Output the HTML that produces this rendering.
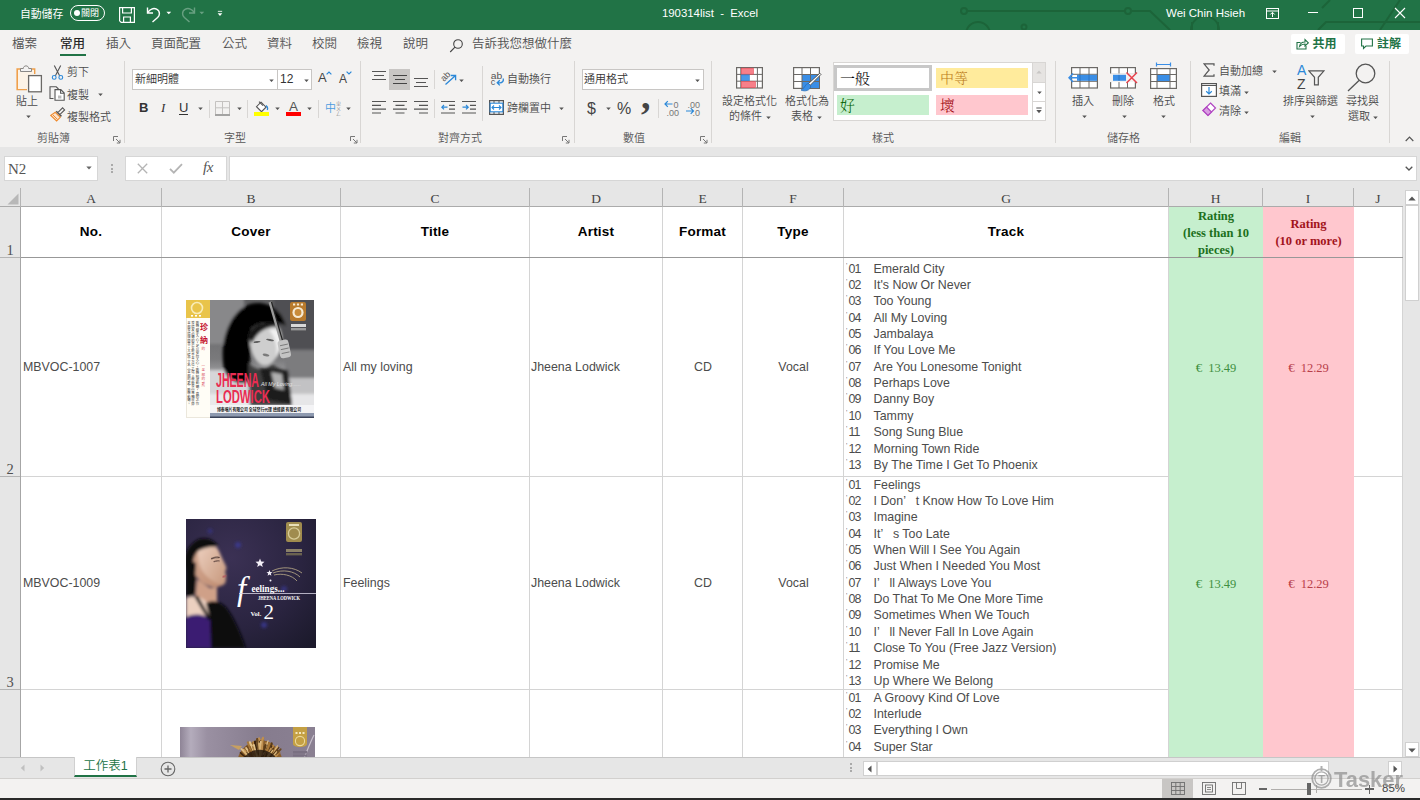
<!DOCTYPE html>
<html lang="zh-Hant">
<head>
<meta charset="utf-8">
<title>190314list - Excel</title>
<style>
*{box-sizing:border-box;margin:0;padding:0}
html,body{width:1420px;height:800px;overflow:hidden;background:#f3f2f1}
body{font-family:"Liberation Sans","Noto Sans CJK TC",sans-serif;font-size:12px;color:#444;position:relative}
.abs{position:absolute}
#app{position:absolute;left:0;top:0;width:1420px;height:800px;overflow:hidden}
/* title bar */
#title{position:absolute;left:0;top:0;width:1420px;height:30px;background:#217346;color:#fff}
#title .t{position:absolute;white-space:nowrap;line-height:14px}
/* tabs */
#tabs{position:absolute;left:0;top:30px;width:1420px;height:27px;background:#f3f2f1}
#tabs .tab{position:absolute;font-weight:350;top:7px;font-size:12.5px;line-height:14px;color:#505050;white-space:nowrap;letter-spacing:0}
/* ribbon */
#ribbon{position:absolute;left:0;top:57px;width:1420px;height:90px;background:#f3f2f1}
#ribbon .lbl{position:absolute;font-weight:350;font-size:11px;line-height:13px;color:#4a4a4a;white-space:nowrap}
#ribbon .sep{position:absolute;top:4px;width:1px;height:82px;background:#d8d6d4}
#ribbon .grp{position:absolute;font-weight:350;top:75px;font-size:11px;line-height:13px;color:#555;white-space:nowrap}
/* formula zone */
#fzone{position:absolute;left:0;top:147px;width:1420px;height:60px;background:#e6e6e6}
/* grid */
#grid{position:absolute;left:0;top:207px;width:1403px;height:550px;background:#fff;overflow:hidden}
.vl{position:absolute;top:0;width:1px;height:550px;background:#d4d4d4}
.hl{position:absolute;left:21px;height:1px;width:1382px;background:#d4d4d4}
.cell{position:absolute;white-space:nowrap;color:#4c4c4c;font-size:12.4px;line-height:17px}
.hd{position:absolute;top:16px;letter-spacing:0.2px;font-weight:bold;color:#000;font-size:13.5px;line-height:17px;text-align:center}
.trk{position:absolute;left:846px;font-size:12.4px;line-height:16.37px;color:#4c4c4c;white-space:pre}
.trk div{height:16.37px}
.trk i{font-style:normal;display:inline-block;width:2.5px;font-size:7px;color:#777;vertical-align:top;line-height:10px;overflow:hidden}
.trk q{quotes:none;display:inline-block;width:12.5px}
.trk b{font-weight:normal;display:inline-block;width:25px;letter-spacing:-0.9px}
.rt{position:absolute;font-family:"Liberation Serif",serif;font-weight:bold;font-size:12.5px;line-height:17px;text-align:center}
.eu{text-align:center;font-family:"Liberation Serif",serif;font-size:12.5px}
.eu u{text-decoration:none;display:inline-block;width:12.5px;text-align:left;font-size:13px;line-height:10px}
.colh{position:absolute;top:44px;font-family:"Liberation Serif",serif;font-size:13.5px;line-height:15px;color:#444;text-align:center}
.rowh{position:absolute;left:0;width:20px;text-align:center;font-family:"Liberation Serif",serif;font-size:14.5px;line-height:15px;color:#505050;margin-top:0.5px}
#ribbon .sty{font-family:"Liberation Serif","Noto Serif CJK SC","Noto Serif CJK TC",serif;font-size:15px;line-height:18px}
svg.arr{width:5px;height:3.4px;margin:0.8px 0 0 0.5px}
</style>
</head>
<body>
<div id="app">

<!-- TITLE BAR -->
<div id="title">
<svg class="abs" style="left:940px;top:0" width="480" height="30" viewBox="940 0 480 30" fill="none" stroke="#1c6439" stroke-width="2">
<circle cx="964" cy="11" r="3"/><path d="M967 11H1125"/><circle cx="1128" cy="11" r="3"/><path d="M1131 11H1150L1170 30"/>
<circle cx="978" cy="34" r="12"/><circle cx="1024" cy="27" r="2.5"/>
<circle cx="1205" cy="30" r="14"/><path d="M1192 22V30M1218 22V30"/>
<path d="M1318 30L1326 22H1420M1380 30L1400 0M1330 0L1322 8"/>
</svg>
<div class="t" style="left:20px;top:7px;font-size:10.8px">自動儲存</div>
<div class="abs" style="left:70px;top:5px;width:35px;height:16px;border:1px solid #fff;border-radius:8px"></div>
<div class="abs" style="left:74px;top:10px;width:6px;height:6px;border-radius:3px;background:#fff"></div>
<div class="t" style="left:81px;top:7px;font-size:9px;line-height:12px;letter-spacing:0">關閉</div>
<svg class="abs" style="left:118px;top:6px" width="18" height="18" viewBox="0 0 18 18" fill="none" stroke="#fff" stroke-width="1.2"><path d="M1.6 1.6H16.4V16.4H3.2L1.6 14.8Z"/><path d="M4.6 1.6V7H13.4V1.6M5.6 16.4V11H12.4V16.4"/></svg>
<svg class="abs" style="left:145px;top:5px" width="18" height="18" viewBox="0 0 18 18" fill="none" stroke="#fff" stroke-width="1.4"><path d="M2.5 2.5V8H8"/><path d="M2.8 7.8C4.5 4.2 8.5 2.6 11.6 4.2C15.6 6.4 14.8 10.6 12.6 12.6L7.5 17"/></svg>
<svg class="abs" style="left:165.500px;top:11px" width="5.500" height="4" viewBox="0 0 7 5"><path d="M0.5 1H6.5L3.5 4.2Z" fill="#fff"/></svg>
<svg class="abs" style="left:179px;top:5px;opacity:.32" width="18" height="18" viewBox="0 0 18 18" fill="none" stroke="#fff" stroke-width="1.4"><path d="M15.5 2.5V8H10"/><path d="M15.2 7.8C13.5 4.2 9.5 2.6 6.4 4.2C2.4 6.4 3.2 10.6 5.4 12.6L10.5 17"/></svg>
<svg class="abs" style="left:198.500px;top:11px;opacity:.32" width="5.500" height="4" viewBox="0 0 7 5"><path d="M0.5 1H6.5L3.5 4.2Z" fill="#fff"/></svg>
<svg class="abs" style="left:216.500px;top:9.500px" width="6" height="7" viewBox="0 0 7 8"><path d="M1 1.5H6" stroke="#fff" stroke-width="1"/><path d="M0.8 3.6H6.2L3.5 6.8Z" fill="#fff"/></svg>
<div class="t" style="left:610px;top:6px;width:200px;text-align:center;font-size:11.4px">190314list&nbsp; -&nbsp; Excel</div>
<div class="t" style="left:1166px;top:6px;font-size:11.5px">Wei Chin Hsieh</div>
<svg class="abs" style="left:1266px;top:8px" width="13" height="11" viewBox="0 0 13 11" fill="none" stroke="#fff" stroke-width="1"><rect x="0.5" y="0.5" width="12" height="10"/><path d="M0.5 3H12.5"/><path d="M6.5 9V4.5M4.3 6.5L6.5 4.3L8.7 6.5"/></svg>
<div class="abs" style="left:1308px;top:12px;width:10px;height:1px;background:#fff"></div>
<div class="abs" style="left:1353px;top:8px;width:10px;height:10px;border:1px solid #fff"></div>
<svg class="abs" style="left:1394px;top:7px" width="12" height="12" viewBox="0 0 12 12" stroke="#fff" stroke-width="1.1"><path d="M1 1L11 11M11 1L1 11"/></svg>
</div>

<!-- TABS -->
<div id="tabs">
<div class="tab" style="left:12px">檔案</div>
<div class="tab" style="left:60px;color:#222;-webkit-text-stroke:0.2px #222;font-weight:400">常用</div>
<div class="abs" style="left:60px;top:24px;width:26px;height:2px;background:#217346"></div>
<div class="tab" style="left:106px">插入</div>
<div class="tab" style="left:151px">頁面配置</div>
<div class="tab" style="left:222px">公式</div>
<div class="tab" style="left:267px">資料</div>
<div class="tab" style="left:312px">校閱</div>
<div class="tab" style="left:357px">檢視</div>
<div class="tab" style="left:403px">說明</div>
<svg class="abs" style="left:449px;top:7.500px" width="15" height="15" viewBox="0 0 15 15" fill="none" stroke="#444" stroke-width="1.1"><circle cx="9" cy="6" r="4.3"/><path d="M6 9.2L1.2 14"/></svg>
<div class="tab" style="left:472px">告訴我您想做什麼</div>
<div class="abs" style="left:1291px;top:4px;width:54px;height:20px;background:#fff;border-radius:2px"></div>
<svg class="abs" style="left:1296px;top:8px" width="13" height="12" viewBox="0 0 13 12" fill="none" stroke="#217346" stroke-width="1.1"><path d="M4.5 4.5H1V11H10V8"/><path d="M3.5 8.5C4 5.5 6 4 9 4V1.5L12.3 4.8L9 8V6C6.5 6 5 6.8 3.5 8.5Z"/></svg>
<div class="tab" style="left:1312.500px;color:#217346;font-weight:bold;top:7px;font-size:12px">共用</div>
<div class="abs" style="left:1355px;top:4px;width:54px;height:20px;background:#fff;border-radius:2px"></div>
<svg class="abs" style="left:1361px;top:8px" width="12" height="12" viewBox="0 0 12 12" fill="none" stroke="#217346" stroke-width="1.1"><path d="M0.6 1H11.4V8H5L2.5 10.5V8H0.6Z"/></svg>
<div class="tab" style="left:1377px;color:#217346;font-weight:bold;top:7px;font-size:12px">註解</div>
</div>

<!-- RIBBON -->
<div id="ribbon">
<!-- clipboard group (ribbon top = 57) -->
<svg class="abs" style="left:15px;top:6px" width="28" height="30" viewBox="0 0 28 30" fill="none">
<path d="M6.5 6H2.2V26.5H12" stroke="#f0a04b" stroke-width="1.6"/><path d="M15.5 6H19.6V11" stroke="#f0a04b" stroke-width="1.6"/>
<path d="M3 7H19V26H3Z" fill="#fdf3e6" stroke="none"/>
<path d="M5.5 8.5V5.5H8.3C8.3 2 13.7 2 13.7 5.5H16.5V8.5Z" fill="#f3f2f1" stroke="#8a8886" stroke-width="1"/>
<rect x="13.6" y="12.6" width="12.8" height="16.2" fill="#fff" stroke="#6b6966" stroke-width="1.3"/>
</svg>
<div class="lbl" style="left:16px;top:38px">貼上</div>
<svg class="abs arr" preserveAspectRatio="none" style="left:25px;top:57px" width="6" height="4" viewBox="0 0 6 4"><path d="M0.3 0.5H5.7L3 3.6Z" fill="#555"/></svg>
<svg class="abs" style="left:51px;top:8px" width="13" height="15" viewBox="0 0 13 15" fill="none"><path d="M3.3 0.5L8.6 10.8M9.7 0.5L4.4 10.8" stroke="#555" stroke-width="1.1"/><circle cx="3.2" cy="12.4" r="1.9" stroke="#2b88d8" stroke-width="1.1"/><circle cx="9.8" cy="12.4" r="1.9" stroke="#2b88d8" stroke-width="1.1"/></svg>
<div class="lbl" style="left:67px;top:9px">剪下</div>
<svg class="abs" style="left:49px;top:29px" width="17" height="15" viewBox="0 0 17 15" fill="none" stroke="#555" stroke-width="1.1"><path d="M4.5 12.5H1V0.8H7.2L9.5 3"/><path d="M6 3.6H11.8L15.2 7V14.3H6Z" fill="#fff"/><path d="M11.6 3.8V7.2H15" /><rect x="9" y="9.5" width="3.4" height="3" fill="#bbb" stroke="none"/></svg>
<div class="lbl" style="left:67px;top:32px">複製</div>
<svg class="abs arr" preserveAspectRatio="none" style="left:97px;top:35px" width="6" height="4" viewBox="0 0 6 4"><path d="M0.3 0.5H5.7L3 3.6Z" fill="#555"/></svg>
<svg class="abs" style="left:50px;top:50px" width="16" height="15" viewBox="0 0 16 15" fill="none"><path d="M8.3 5.2L12.6 0.9L14.6 2.9L10.3 7.2" stroke="#555" stroke-width="1.1"/><path d="M6.2 4.2L11.4 9.4" stroke="#555" stroke-width="1.6"/><path d="M5.3 5.3L10.3 10.3L6.6 14L0.8 8.4Z" fill="#fbe3cd" stroke="#f08a2c" stroke-width="1.1"/><path d="M3 8L7.5 12.4" stroke="#f08a2c" stroke-width="1"/></svg>
<div class="lbl" style="left:67px;top:54px">複製格式</div>
<div class="grp" style="left:37px">剪貼簿</div>
<svg class="abs" style="left:113px;top:79px" width="8" height="8" viewBox="0 0 8 8" fill="none" stroke="#777" stroke-width="1"><path d="M0.5 5V0.5H5"/><path d="M3 3L7 7M7 3.8V7H3.8"/></svg>
<div class="sep" style="left:124px"></div>

<!-- font group -->
<div class="abs" style="left:132px;top:12px;width:146px;height:21px;background:#fff;border:1px solid #c8c6c4"></div>
<div class="lbl" style="left:135px;top:16px;color:#333">新細明體</div>
<svg class="abs arr" preserveAspectRatio="none" style="left:268px;top:21px" width="6" height="4" viewBox="0 0 6 4"><path d="M0.3 0.5H5.7L3 3.6Z" fill="#555"/></svg>
<div class="abs" style="left:277px;top:12px;width:35px;height:21px;background:#fff;border:1px solid #c8c6c4"></div>
<div class="lbl" style="left:280px;top:16px;font-size:12px;color:#333">12</div>
<svg class="abs arr" preserveAspectRatio="none" style="left:303px;top:21px" width="6" height="4" viewBox="0 0 6 4"><path d="M0.3 0.5H5.7L3 3.6Z" fill="#555"/></svg>
<div class="lbl" style="left:318px;top:14px;font-size:13px;line-height:14px;color:#444">A</div>
<svg class="abs" style="left:326px;top:14px" width="6" height="4" viewBox="0 0 6 4" fill="none" stroke="#2b88d8" stroke-width="1.2"><path d="M0.6 3.4L3 1L5.4 3.4"/></svg>
<div class="lbl" style="left:339px;top:15px;font-size:12px;line-height:14px;color:#444">A</div>
<svg class="abs" style="left:346px;top:14px" width="6" height="4" viewBox="0 0 6 4" fill="none" stroke="#2b88d8" stroke-width="1.2"><path d="M0.6 0.6L3 3L5.4 0.6"/></svg>
<div class="lbl" style="left:139px;top:44px;font-size:13px;line-height:14px;font-weight:bold;color:#333">B</div>
<div class="lbl" style="left:161px;top:44px;font-size:13px;line-height:14px;font-style:italic;font-family:'Liberation Serif',serif;color:#333">I</div>
<div class="lbl" style="left:179px;top:44px;font-size:13px;line-height:14px;color:#333;border-bottom:1px solid #333;height:14px">U</div>
<svg class="abs arr" preserveAspectRatio="none" style="left:197px;top:49px" width="6" height="4" viewBox="0 0 6 4"><path d="M0.3 0.5H5.7L3 3.6Z" fill="#555"/></svg>
<div class="abs" style="left:209px;top:43px;width:1px;height:18px;background:#d8d6d4"></div>
<svg class="abs" style="left:215px;top:44px" width="15" height="15" viewBox="0 0 15 15" fill="none"><path d="M0.5 0.5H14.5V13M0.5 0.5V13M7.5 0.5V13M0.5 6.8H14.5" stroke="#c4c2c0" stroke-width="1"/><path d="M0 14H15" stroke="#777" stroke-width="1.3"/></svg>
<svg class="abs arr" preserveAspectRatio="none" style="left:236px;top:49px" width="6" height="4" viewBox="0 0 6 4"><path d="M0.3 0.5H5.7L3 3.6Z" fill="#555"/></svg>
<div class="abs" style="left:247px;top:43px;width:1px;height:18px;background:#d8d6d4"></div>
<svg class="abs" style="left:255px;top:44px" width="14" height="12" viewBox="0 0 14 12" fill="none"><path d="M6 1.2L11 6.2L6.5 10.7L1.5 5.7Z" fill="#fff" stroke="#555" stroke-width="1.1"/><path d="M4 0.6L8 4.6" stroke="#555" stroke-width="1.1"/><path d="M11 4.5C12.8 6 12.8 7.8 12.2 9" stroke="#2b88d8" stroke-width="1.3"/></svg>
<div class="abs" style="left:254px;top:55px;width:15px;height:4px;background:#ffff00"></div>
<svg class="abs arr" preserveAspectRatio="none" style="left:274px;top:49px" width="6" height="4" viewBox="0 0 6 4"><path d="M0.3 0.5H5.7L3 3.6Z" fill="#555"/></svg>
<div class="lbl" style="left:289px;top:42.500px;font-size:13.500px;line-height:14px;color:#555">A</div>
<div class="abs" style="left:286px;top:55px;width:15px;height:4px;background:#ff0000"></div>
<svg class="abs arr" preserveAspectRatio="none" style="left:306px;top:49px" width="6" height="4" viewBox="0 0 6 4"><path d="M0.3 0.5H5.7L3 3.6Z" fill="#555"/></svg>
<div class="abs" style="left:318px;top:43px;width:1px;height:18px;background:#d8d6d4"></div>
<div class="lbl" style="left:325px;top:44px;font-size:11px;line-height:14px;color:#4a9be0">中</div>
<div class="lbl" style="left:336px;top:44px;font-size:5px;line-height:5px;color:#777;width:5px;white-space:normal;word-break:break-all">ㄓㄨㄥ</div>
<svg class="abs arr" preserveAspectRatio="none" style="left:345px;top:49px" width="6" height="4" viewBox="0 0 6 4"><path d="M0.3 0.5H5.7L3 3.6Z" fill="#555"/></svg>
<div class="grp" style="left:224px">字型</div>
<svg class="abs" style="left:350px;top:79px" width="8" height="8" viewBox="0 0 8 8" fill="none" stroke="#777" stroke-width="1"><path d="M0.5 5V0.5H5"/><path d="M3 3L7 7M7 3.8V7H3.8"/></svg>
<div class="sep" style="left:360px"></div>
<!-- alignment group -->
<svg class="abs" style="left:372px;top:13px" width="15" height="12" viewBox="0 0 15 12" stroke="#555" stroke-width="1.2"><path d="M0 1.5H14M2 5.5H12M0 9.5H14"/></svg>
<div class="abs" style="left:389px;top:12px;width:21px;height:21px;background:#c8c6c4"></div>
<svg class="abs" style="left:393px;top:17px" width="15" height="12" viewBox="0 0 15 12" stroke="#444" stroke-width="1.2"><path d="M0 1.5H14M2 5.5H12M0 9.5H14"/></svg>
<svg class="abs" style="left:414px;top:20px" width="15" height="12" viewBox="0 0 15 12" stroke="#555" stroke-width="1.2"><path d="M0 1.5H14M2 5.5H12M0 9.5H14"/></svg>
<div class="abs" style="left:434px;top:13px;width:1px;height:19px;background:#d8d6d4"></div>
<svg class="abs" style="left:440px;top:13px" width="17" height="16" viewBox="0 0 17 16" fill="none"><path d="M5.500 14.500L15.300 5.800M10.800 5.500H15.600V10.200" stroke="#2b88d8" stroke-width="1.300"/><text transform="translate(4,12) rotate(-45)" font-family="Liberation Sans, sans-serif" font-size="9" fill="#555">ab</text></svg>
<svg class="abs arr" preserveAspectRatio="none" style="left:458px;top:21px" width="6" height="4" viewBox="0 0 6 4"><path d="M0.3 0.5H5.7L3 3.6Z" fill="#555"/></svg>
<div class="abs" style="left:482px;top:9px;width:1px;height:55px;background:#d8d6d4"></div>
<svg class="abs" style="left:490px;top:13px" width="15" height="17" viewBox="0 0 15 17" fill="none"><text x="0.800" y="8.500" font-family="Liberation Sans, sans-serif" font-size="9.500" fill="#555" textLength="11.500" lengthAdjust="spacingAndGlyphs">ab</text><text x="0.800" y="14.800" font-family="Liberation Sans, sans-serif" font-size="9" fill="#555">c</text><path d="M13.300 8.500C13.800 11.500 12 12.800 10 12.800H7.500M9.800 10.200L7.200 12.800L9.800 15.400" stroke="#2b88d8" stroke-width="1.300"/></svg>
<div class="lbl" style="left:507px;top:16px">自動換行</div>
<svg class="abs" style="left:372px;top:43px" width="15" height="15" viewBox="0 0 15 15" stroke="#555" stroke-width="1.2"><path d="M0 1.5H14M0 5.3H9M0 9.2H14M0 13H9"/></svg>
<svg class="abs" style="left:393px;top:43px" width="15" height="15" viewBox="0 0 15 15" stroke="#555" stroke-width="1.2"><path d="M0 1.5H14M2.5 5.3H11.5M0 9.2H14M2.5 13H11.5"/></svg>
<svg class="abs" style="left:414px;top:43px" width="15" height="15" viewBox="0 0 15 15" stroke="#555" stroke-width="1.2"><path d="M0 1.5H14M5 5.3H14M0 9.2H14M5 13H14"/></svg>
<div class="abs" style="left:434px;top:42px;width:1px;height:19px;background:#d8d6d4"></div>
<svg class="abs" style="left:441px;top:43px" width="15" height="15" viewBox="0 0 15 15" fill="none"><path d="M0 1.5H14M8 5.3H14M8 9.2H14M0 13H14" stroke="#555" stroke-width="1.2"/><path d="M0.8 7.2H6.5M3 5L0.8 7.2L3 9.4" stroke="#2b88d8" stroke-width="1.2"/></svg>
<svg class="abs" style="left:462px;top:43px" width="15" height="15" viewBox="0 0 15 15" fill="none"><path d="M0 1.5H14M8 5.3H14M8 9.2H14M0 13H14" stroke="#555" stroke-width="1.2"/><path d="M0.5 7.2H6.2M4 5L6.2 7.2L4 9.4" stroke="#2b88d8" stroke-width="1.2"/></svg>
<svg class="abs" style="left:489px;top:43px" width="15" height="15" viewBox="0 0 15 15" fill="none"><rect x="0.6" y="0.6" width="13.8" height="13.8" stroke="#555" stroke-width="1.2"/><path d="M5 0.6V3M10 0.6V3M5 12V14.4M10 12V14.4" stroke="#555" stroke-width="1"/><rect x="1.2" y="3.2" width="12.6" height="8.6" fill="#fff" stroke="#2b88d8" stroke-width="1.1"/><path d="M3 7.5H12M5 5.5L3 7.5L5 9.5M10 5.5L12 7.5L10 9.5" stroke="#2b88d8" stroke-width="1.1"/></svg>
<div class="lbl" style="left:507px;top:45px">跨欄置中</div>
<svg class="abs arr" preserveAspectRatio="none" style="left:558px;top:49px" width="6" height="4" viewBox="0 0 6 4"><path d="M0.3 0.5H5.7L3 3.6Z" fill="#555"/></svg>
<div class="grp" style="left:438px">對齊方式</div>
<svg class="abs" style="left:562px;top:79px" width="8" height="8" viewBox="0 0 8 8" fill="none" stroke="#777" stroke-width="1"><path d="M0.5 5V0.5H5"/><path d="M3 3L7 7M7 3.8V7H3.8"/></svg>
<div class="sep" style="left:574px"></div>

<!-- number group -->
<div class="abs" style="left:582px;top:12px;width:122px;height:21px;background:#fff;border:1px solid #c8c6c4"></div>
<div class="lbl" style="left:584px;top:16px;color:#333">通用格式</div>
<svg class="abs arr" preserveAspectRatio="none" style="left:694px;top:21px" width="6" height="4" viewBox="0 0 6 4"><path d="M0.3 0.5H5.7L3 3.6Z" fill="#555"/></svg>
<div class="lbl" style="left:587px;top:43px;font-size:16px;line-height:18px;color:#444">$</div>
<svg class="abs arr" preserveAspectRatio="none" style="left:605px;top:49px" width="6" height="4" viewBox="0 0 6 4"><path d="M0.3 0.5H5.7L3 3.6Z" fill="#555"/></svg>
<div class="lbl" style="left:617px;top:43px;font-size:16px;line-height:18px;color:#444">%</div>
<div class="lbl" style="left:641px;top:24px;font-size:38px;line-height:30px;font-weight:bold;color:#444;font-family:'Liberation Serif',serif">,</div>
<div class="abs" style="left:658px;top:42px;width:1px;height:19px;background:#d8d6d4"></div>
<svg class="abs" style="left:664px;top:42px" width="17" height="18" viewBox="0 0 17 18" fill="none"><text x="9.500" y="8.500" font-family="Liberation Sans, sans-serif" font-size="9" fill="#777">0</text><text x="2.500" y="16.500" font-family="Liberation Sans, sans-serif" font-size="9" fill="#777">.00</text><path d="M1 5H8.500M3.800 2.200L1 5L3.800 7.800" stroke="#2b88d8" stroke-width="1.200"/></svg>
<svg class="abs" style="left:685px;top:42px" width="17" height="18" viewBox="0 0 17 18" fill="none"><text x="2.500" y="8.500" font-family="Liberation Sans, sans-serif" font-size="9" fill="#777">.00</text><text x="7.500" y="16.500" font-family="Liberation Sans, sans-serif" font-size="9" fill="#777">.0</text><path d="M1 12H8.500M5.700 9.200L8.500 12L5.700 14.800" stroke="#2b88d8" stroke-width="1.200"/></svg>
<div class="grp" style="left:623px">數值</div>
<svg class="abs" style="left:700px;top:79px" width="8" height="8" viewBox="0 0 8 8" fill="none" stroke="#777" stroke-width="1"><path d="M0.5 5V0.5H5"/><path d="M3 3L7 7M7 3.8V7H3.8"/></svg>
<div class="sep" style="left:711px"></div>
<!-- styles group -->
<svg class="abs" style="left:736px;top:10px" width="27" height="22" viewBox="0 0 27 22" fill="none"><rect x="0.6" y="0.6" width="25.8" height="20.4" fill="#fff" stroke="#6b6966" stroke-width="1.2"/><path d="M0.6 7.4H26.4M0.6 14.2H26.4M4.8 0.6V21M21.4 0.6V21" stroke="#6b6966" stroke-width="1"/><rect x="5.3" y="1.2" width="12" height="6" fill="#f7808a" stroke="#e8414d" stroke-width="0.6"/><rect x="5.3" y="7.9" width="8" height="5.8" fill="#4a98e8" stroke="#2b78c8" stroke-width="0.6"/><rect x="5.3" y="14.7" width="14" height="5.8" fill="#f7808a" stroke="#e8414d" stroke-width="0.6"/></svg>
<div class="lbl" style="left:722px;top:38px">設定格式化</div>
<div class="lbl" style="left:729px;top:53px">的條件</div>
<svg class="abs arr" preserveAspectRatio="none" style="left:765px;top:58px" width="6" height="4" viewBox="0 0 6 4"><path d="M0.3 0.5H5.7L3 3.6Z" fill="#555"/></svg>
<svg class="abs" style="left:793px;top:10px" width="29" height="26" viewBox="0 0 29 26" fill="none"><rect x="0.6" y="0.6" width="25.8" height="20.8" fill="#fff" stroke="#6b6966" stroke-width="1.2"/><rect x="9" y="7.5" width="17" height="13.5" fill="#3a8ee6"/><path d="M0.6 7.5H26.4M0.6 14.5H26.4M9 0.6V21.4M17.5 0.6V21.4" stroke="#6b6966" stroke-width="1"/><path d="M26.8 6.2L28 7.4L17 18.5L15 17Z" fill="#fff" stroke="#555" stroke-width="1"/><path d="M15.5 16.5C12 16.5 12.5 21 8 23C12 25 17.5 23.5 17.8 18.8Z" fill="#3a8ee6" stroke="#2b6fb8" stroke-width="0.8"/></svg>
<div class="lbl" style="left:785px;top:38px">格式化為</div>
<div class="lbl" style="left:791px;top:53px">表格</div>
<svg class="abs arr" preserveAspectRatio="none" style="left:816px;top:58px" width="6" height="4" viewBox="0 0 6 4"><path d="M0.3 0.5H5.7L3 3.6Z" fill="#555"/></svg>
<div class="abs" style="left:833px;top:5px;width:213px;height:59px;background:#fff;border:1px solid #d8d6d4"></div>
<div class="abs" style="left:834px;top:8px;width:98px;height:26px;background:#fff;border:3px solid #c8c8c8"></div>
<div class="lbl sty" style="left:840px;top:13px;color:#000">一般</div>
<div class="abs" style="left:936px;top:11px;width:92px;height:20px;background:#ffeb9c"></div>
<div class="lbl sty" style="left:940px;top:13px;color:#bb7a1a;font-size:14px">中等</div>
<div class="abs" style="left:837px;top:38px;width:92px;height:20px;background:#c6efce"></div>
<div class="lbl sty" style="left:840px;top:40px;color:#006100">好</div>
<div class="abs" style="left:936px;top:38px;width:92px;height:20px;background:#ffc7ce"></div>
<div class="lbl sty" style="left:940px;top:40px;color:#9c0006">壞</div>
<div class="abs" style="left:1032px;top:5px;width:14px;height:59px;border:1px solid #d8d6d4;background:#fff"></div>
<div class="abs" style="left:1033px;top:6px;width:12px;height:19px;background:#e6e4e2"></div>
<div class="abs" style="left:1033px;top:25px;width:12px;height:1px;background:#d8d6d4"></div>
<div class="abs" style="left:1033px;top:44px;width:12px;height:1px;background:#d8d6d4"></div>
<svg class="abs" style="left:1036px;top:13px" width="6" height="4" viewBox="0 0 6 4"><path d="M0.3 3.5H5.7L3 0.4Z" fill="#c8c6c4"/></svg>
<svg class="abs arr" preserveAspectRatio="none" style="left:1036px;top:33px" width="6" height="4" viewBox="0 0 6 4"><path d="M0.3 0.5H5.7L3 3.6Z" fill="#555"/></svg>
<svg class="abs" style="left:1036px;top:50px" width="6" height="7" viewBox="0 0 6 7"><path d="M0.3 1H5.7" stroke="#555" stroke-width="1"/><path d="M0.3 3H5.7L3 6.2Z" fill="#555"/></svg>
<div class="grp" style="left:872px">樣式</div>
<div class="sep" style="left:1055px"></div>

<!-- cells group -->
<svg class="abs" style="left:1068px;top:10px" width="31" height="22" viewBox="0 0 31 22" fill="none"><rect x="3.6" y="0.6" width="25.8" height="20.4" fill="#fff" stroke="#6b6966" stroke-width="1.2"/><path d="M3.6 7.3H29.4M3.6 14.3H29.4M12 0.6V21M21 0.6V21" stroke="#6b6966" stroke-width="1"/><rect x="9" y="7.8" width="20" height="6" fill="#3a8ee6"/><path d="M1 10.8H14M5 6.5L1 10.8L5 15" stroke="#3a8ee6" stroke-width="1.5"/><path d="M12 7.8V13.8M21 7.8V13.8" stroke="#2b6fb8" stroke-width="0.8"/></svg>
<div class="lbl" style="left:1072px;top:38px">插入</div>
<svg class="abs arr" preserveAspectRatio="none" style="left:1081px;top:57px" width="6" height="4" viewBox="0 0 6 4"><path d="M0.3 0.5H5.7L3 3.6Z" fill="#555"/></svg>
<svg class="abs" style="left:1109px;top:10px" width="30" height="22" viewBox="0 0 30 22" fill="none"><rect x="1.6" y="0.6" width="24.8" height="20.4" fill="#fff" stroke="#6b6966" stroke-width="1.2"/><path d="M1.6 7.3H26.4M1.6 14.3H26.4M10 0.6V21M18.5 0.6V21" stroke="#6b6966" stroke-width="1"/><rect x="0" y="6.5" width="30" height="8.6" fill="#f3f2f1"/><rect x="4" y="7.8" width="13" height="6" fill="#3a8ee6"/><path d="M10 7.8V13.8" stroke="#2b6fb8" stroke-width="0.8"/><path d="M17.5 5.5L28 16M28 5.5L17.5 16" stroke="#e8414d" stroke-width="1.5"/></svg>
<div class="lbl" style="left:1112px;top:38px">刪除</div>
<svg class="abs arr" preserveAspectRatio="none" style="left:1121px;top:57px" width="6" height="4" viewBox="0 0 6 4"><path d="M0.3 0.5H5.7L3 3.6Z" fill="#555"/></svg>
<svg class="abs" style="left:1150px;top:5px" width="28" height="27" viewBox="0 0 28 27" fill="none"><path d="M6.5 2.5H20.5M6.5 0.5V4.5M20.5 0.5V4.5" stroke="#3a8ee6" stroke-width="1.2"/><rect x="0.6" y="6.6" width="25.8" height="19.8" fill="#fff" stroke="#6b6966" stroke-width="1.2"/><rect x="7" y="12.5" width="13" height="7" fill="#3a8ee6"/><path d="M0.6 12.5H26.4M0.6 19.5H26.4M7 6.6V26.4M20 6.6V26.4" stroke="#6b6966" stroke-width="1"/></svg>
<div class="lbl" style="left:1153px;top:38px">格式</div>
<svg class="abs arr" preserveAspectRatio="none" style="left:1160px;top:57px" width="6" height="4" viewBox="0 0 6 4"><path d="M0.3 0.5H5.7L3 3.6Z" fill="#555"/></svg>
<div class="grp" style="left:1107px">儲存格</div>
<div class="sep" style="left:1190px"></div>

<!-- editing group -->
<svg class="abs" style="left:1203px;top:6px" width="12" height="14" viewBox="0 0 12 14" fill="none" stroke="#555" stroke-width="1.2"><path d="M11 2.8V0.8H1L6.2 7L1 13.2H11V11.2"/></svg>
<div class="lbl" style="left:1219px;top:8px">自動加總</div>
<svg class="abs arr" preserveAspectRatio="none" style="left:1271px;top:12px" width="6" height="4" viewBox="0 0 6 4"><path d="M0.3 0.5H5.7L3 3.6Z" fill="#555"/></svg>
<svg class="abs" style="left:1201px;top:26px" width="16" height="14" viewBox="0 0 16 14" fill="none"><rect x="0.6" y="0.6" width="14.8" height="12.8" fill="#fff" stroke="#555" stroke-width="1.2"/><path d="M0.6 2.5H15.4" stroke="#555" stroke-width="1"/><path d="M8 4V11M5.2 8.3L8 11L10.8 8.3" stroke="#2b88d8" stroke-width="1.2"/></svg>
<div class="lbl" style="left:1219px;top:28px">填滿</div>
<svg class="abs arr" preserveAspectRatio="none" style="left:1243px;top:33px" width="6" height="4" viewBox="0 0 6 4"><path d="M0.3 0.5H5.7L3 3.6Z" fill="#555"/></svg>
<svg class="abs" style="left:1201px;top:45px" width="16" height="15" viewBox="0 0 16 15" fill="none"><path d="M9.5 1L14.5 6L7 13.5L2 8.5Z" fill="#fff" stroke="#b146c2" stroke-width="1.2"/><path d="M5.5 5L10.5 10L7 13.5L2 8.5Z" fill="#d99ee2" stroke="#b146c2" stroke-width="1.2"/></svg>
<div class="lbl" style="left:1219px;top:48px">清除</div>
<svg class="abs arr" preserveAspectRatio="none" style="left:1243px;top:53px" width="6" height="4" viewBox="0 0 6 4"><path d="M0.3 0.5H5.7L3 3.6Z" fill="#555"/></svg>
<div class="lbl" style="left:1297px;top:7px;font-size:14px;line-height:13px;color:#2b88d8">A</div>
<div class="lbl" style="left:1297px;top:21px;font-size:14px;line-height:13px;color:#444">Z</div>
<svg class="abs" style="left:1308px;top:13px" width="17" height="16" viewBox="0 0 17 16" fill="none" stroke="#555" stroke-width="1.2"><path d="M0.8 0.8H16L10.3 7.3V14.8H6.5V7.3Z" fill="#f3f2f1"/></svg>
<div class="lbl" style="left:1283px;top:38px">排序與篩選</div>
<svg class="abs arr" preserveAspectRatio="none" style="left:1309px;top:57px" width="6" height="4" viewBox="0 0 6 4"><path d="M0.3 0.5H5.7L3 3.6Z" fill="#555"/></svg>
<svg class="abs" style="left:1347px;top:6px" width="30" height="29" viewBox="0 0 30 29" fill="none" stroke="#555" stroke-width="1.3"><circle cx="18.5" cy="10.5" r="9.3"/><path d="M12 17.5L1 28"/></svg>
<div class="lbl" style="left:1346px;top:38px">尋找與</div>
<div class="lbl" style="left:1348px;top:53px">選取</div>
<svg class="abs arr" preserveAspectRatio="none" style="left:1372px;top:58px" width="6" height="4" viewBox="0 0 6 4"><path d="M0.3 0.5H5.7L3 3.6Z" fill="#555"/></svg>
<div class="grp" style="left:1279px">編輯</div>
<div class="sep" style="left:1389px"></div>
<svg class="abs" style="left:1405px;top:79px" width="9" height="6" viewBox="0 0 9 6" fill="none" stroke="#555" stroke-width="1.2"><path d="M0.7 5L4.5 1.2L8.3 5"/></svg>
</div>

<!-- FORMULA ZONE + COLUMN HEADERS -->
<div id="fzone">
<div class="abs" style="left:4px;top:9px;width:94px;height:25px;background:#fff;border:1px solid #d6d6d6"></div>
<div class="abs" style="left:8px;top:14px;font-family:'Liberation Serif',serif;font-size:15px;line-height:17px;color:#555">N2</div>
<svg class="abs" style="left:86px;top:19px" width="6" height="4" viewBox="0 0 6 4"><path d="M0.3 0.5H5.7L3 3.6Z" fill="#666"/></svg>
<div class="abs" style="left:111px;top:17px;width:2px;height:2px;background:#aaa"></div>
<div class="abs" style="left:111px;top:20.5px;width:2px;height:2px;background:#aaa"></div>
<div class="abs" style="left:111px;top:24px;width:2px;height:2px;background:#aaa"></div>
<div class="abs" style="left:125px;top:9px;width:102px;height:25px;background:#fff;border:1px solid #d6d6d6"></div>
<svg class="abs" style="left:137px;top:16px" width="11" height="11" viewBox="0 0 11 11" stroke="#b4b4b4" stroke-width="1.3"><path d="M0.8 0.8L10.2 10.2M10.2 0.8L0.8 10.2"/></svg>
<svg class="abs" style="left:169px;top:16px" width="14" height="11" viewBox="0 0 14 11" fill="none" stroke="#b4b4b4" stroke-width="1.8"><path d="M1 5.8L4.8 9.6L13 1.2"/></svg>
<div class="abs" style="left:203px;top:11px;font-family:'Liberation Serif',serif;font-style:italic;font-size:15px;line-height:18px;color:#555;letter-spacing:-0.5px">fx</div>
<div class="abs" style="left:229px;top:9px;width:1188px;height:25px;background:#fff;border:1px solid #d6d6d6"></div>
<svg class="abs" style="left:1405px;top:19px" width="8" height="5" viewBox="0 0 8 5" fill="none" stroke="#555" stroke-width="1.3"><path d="M0.7 0.7L4 4L7.3 0.7"/></svg>
<!-- column headers : fzone top=147 so y=190 -> 43 -->
<svg class="abs" style="left:7px;top:46px" width="12" height="12" viewBox="0 0 12 12"><path d="M11.5 0.5V11.5H0.5Z" fill="#b8b8b8"/></svg>
<div class="abs" style="left:0;top:59px;width:1403px;height:1px;background:#ababab"></div>
<div class="colh" style="left:21px;width:140px">A</div>
<div class="abs" style="left:161px;top:41px;width:1px;height:19px;background:#b4b4b4"></div>
<div class="colh" style="left:162px;width:178px">B</div>
<div class="abs" style="left:340px;top:41px;width:1px;height:19px;background:#b4b4b4"></div>
<div class="colh" style="left:341px;width:188px">C</div>
<div class="abs" style="left:529px;top:41px;width:1px;height:19px;background:#b4b4b4"></div>
<div class="colh" style="left:530px;width:132px">D</div>
<div class="abs" style="left:662px;top:41px;width:1px;height:19px;background:#b4b4b4"></div>
<div class="colh" style="left:663px;width:79px">E</div>
<div class="abs" style="left:742px;top:41px;width:1px;height:19px;background:#b4b4b4"></div>
<div class="colh" style="left:743px;width:100px">F</div>
<div class="abs" style="left:843px;top:41px;width:1px;height:19px;background:#b4b4b4"></div>
<div class="colh" style="left:844px;width:324px">G</div>
<div class="abs" style="left:1168px;top:41px;width:1px;height:19px;background:#b4b4b4"></div>
<div class="colh" style="left:1169px;width:93px">H</div>
<div class="abs" style="left:1262px;top:41px;width:1px;height:19px;background:#b4b4b4"></div>
<div class="colh" style="left:1263px;width:90px">I</div>
<div class="abs" style="left:1353px;top:41px;width:1px;height:19px;background:#b4b4b4"></div>
<div class="colh" style="left:1354px;width:48px">J</div>
<div class="abs" style="left:20px;top:41px;width:1px;height:19px;background:#b4b4b4"></div>
<!-- vscroll top -->
<div class="abs" style="left:1403px;top:41px;width:17px;height:19px;background:#e6e6e6"></div>
<div class="abs" style="left:1405px;top:43px;width:14px;height:15px;background:#fff;border:1px solid #d0d0d0"></div>
<svg class="abs" style="left:1408px;top:49px" width="8" height="5" viewBox="0 0 8 5"><path d="M0.3 4.6H7.7L4 0.6Z" fill="#555"/></svg>
</div>

<!-- GRID -->
<div id="grid">
<div class="abs" style="left:0;top:0;width:20px;height:550px;background:#e6e6e6"></div>
<div class="abs" style="left:20px;top:0;width:1px;height:550px;background:#a6a6a6"></div>
<div class="vl" style="left:161px"></div>
<div class="vl" style="left:340px"></div>
<div class="vl" style="left:529px"></div>
<div class="vl" style="left:662px"></div>
<div class="vl" style="left:742px"></div>
<div class="vl" style="left:843px"></div>
<div class="vl" style="left:1168px"></div>
<div class="vl" style="left:1262px"></div>
<div class="vl" style="left:1353px"></div>
<div class="vl" style="left:1402px"></div>
<div class="hl" style="top:50px;background:#989898"></div>
<div class="abs" style="left:0;top:50px;width:20px;height:1px;background:#b4b4b4"></div>
<div class="hl" style="top:269px;background:#d4d4d4"></div>
<div class="abs" style="left:0;top:269px;width:20px;height:1px;background:#b4b4b4"></div>
<div class="hl" style="top:482px;background:#d4d4d4"></div>
<div class="abs" style="left:0;top:482px;width:20px;height:1px;background:#b4b4b4"></div>
<div class="abs" style="left:1169px;top:0;width:93.5px;height:50px;background:#c6efce"></div>
<div class="abs" style="left:1262.5px;top:0;width:91.5px;height:50px;background:#ffc7ce"></div>
<div class="abs" style="left:1169px;top:51px;width:93.5px;height:499px;background:#c6efce"></div>
<div class="abs" style="left:1262.5px;top:51px;width:91.5px;height:499px;background:#ffc7ce"></div>
<div class="rowh" style="top:35px">1</div>
<div class="rowh" style="top:254px">2</div>
<div class="rowh" style="top:467px">3</div>
<div class="hd" style="left:21px;width:140px">No.</div>
<div class="hd" style="left:162px;width:178px">Cover</div>
<div class="hd" style="left:341px;width:188px">Title</div>
<div class="hd" style="left:530px;width:132px">Artist</div>
<div class="hd" style="left:663px;width:79px">Format</div>
<div class="hd" style="left:743px;width:100px">Type</div>
<div class="hd" style="left:844px;width:324px">Track</div>
<div class="rt" style="left:1169px;width:94px;top:1px;color:#1c701c">Rating<br>(less than 10<br>pieces)</div>
<div class="rt" style="left:1263px;width:91px;top:9px;color:#a2141c">Rating<br>(10 or more)</div>
<div class="cell" style="left:23px;top:151.5px">MBVOC-1007</div>
<div class="cell" style="left:343px;top:151.5px">All my loving</div>
<div class="cell" style="left:531px;top:151.5px">Jheena Lodwick</div>
<div class="cell" style="left:663px;width:80px;text-align:center;top:151.5px">CD</div>
<div class="cell" style="left:743px;width:101px;text-align:center;top:151.5px">Vocal</div>
<div class="cell eu" style="left:1169px;width:94px;top:153.0px;color:#3f8f3f"><u>€</u>13.49</div>
<div class="cell eu" style="left:1263px;width:91px;top:153.0px;color:#b8404a"><u>€</u>12.29</div>
<div class="cell" style="left:23px;top:367.5px">MBVOC-1009</div>
<div class="cell" style="left:343px;top:367.5px">Feelings</div>
<div class="cell" style="left:531px;top:367.5px">Jheena Lodwick</div>
<div class="cell" style="left:663px;width:80px;text-align:center;top:367.5px">CD</div>
<div class="cell" style="left:743px;width:101px;text-align:center;top:367.5px">Vocal</div>
<div class="cell eu" style="left:1169px;width:94px;top:369.0px;color:#3f8f3f"><u>€</u>13.49</div>
<div class="cell eu" style="left:1263px;width:91px;top:369.0px;color:#b8404a"><u>€</u>12.29</div>
<div class="trk" style="top:53.6px"><div><i>'</i><b>01</b>Emerald City</div><div><i>'</i><b>02</b>It's Now Or Never</div><div><i>'</i><b>03</b>Too Young</div><div><i>'</i><b>04</b>All My Loving</div><div><i>'</i><b>05</b>Jambalaya</div><div><i>'</i><b>06</b>If You Love Me</div><div><i>'</i><b>07</b>Are You Lonesome Tonight</div><div><i>'</i><b>08</b>Perhaps Love</div><div><i>'</i><b>09</b>Danny Boy</div><div><i>'</i><b>10</b>Tammy</div><div><i>'</i><b>11</b>Song Sung Blue</div><div><i>'</i><b>12</b>Morning Town Ride</div><div><i>'</i><b>13</b>By The Time I Get To Phoenix</div></div>
<div class="trk" style="top:269.6px"><div><i>'</i><b>01</b>Feelings</div><div><i>'</i><b>02</b>I Don<q>’</q>t Know How To Love Him</div><div><i>'</i><b>03</b>Imagine</div><div><i>'</i><b>04</b>It<q>’</q>s Too Late</div><div><i>'</i><b>05</b>When Will I See You Again</div><div><i>'</i><b>06</b>Just When I Needed You Most</div><div><i>'</i><b>07</b>I<q>’</q>ll Always Love You</div><div><i>'</i><b>08</b>Do That To Me One More Time</div><div><i>'</i><b>09</b>Sometimes When We Touch</div><div><i>'</i><b>10</b>I<q>’</q>ll Never Fall In Love Again</div><div><i>'</i><b>11</b>Close To You (Free Jazz Version)</div><div><i>'</i><b>12</b>Promise Me</div><div><i>'</i><b>13</b>Up Where We Belong</div></div>
<div class="trk" style="top:482.5px"><div><i>'</i><b>01</b>A Groovy Kind Of Love</div><div><i>'</i><b>02</b>Interlude</div><div><i>'</i><b>03</b>Everything I Own</div><div><i>'</i><b>04</b>Super Star</div></div>
<!-- cover 1 : x186 y300 (grid y 93) 127x118 -->
<svg class="abs" style="left:186px;top:93px" width="128" height="118" viewBox="0 0 128 118">
<defs>
<linearGradient id="c1bg" x1="0" y1="0" x2="0" y2="1"><stop offset="0" stop-color="#5e5e60"/><stop offset="0.5" stop-color="#7a7a7c"/><stop offset="0.8" stop-color="#cfcfd1"/><stop offset="1" stop-color="#f0f0f2"/></linearGradient>
<radialGradient id="c1face" cx="0.55" cy="0.45" r="0.6"><stop offset="0" stop-color="#e4e4e4"/><stop offset="0.7" stop-color="#bdbdbd"/><stop offset="1" stop-color="#7a7a7a"/></radialGradient>
<filter id="b1" x="-20%" y="-20%" width="140%" height="140%"><feGaussianBlur stdDeviation="1.6"/></filter>
<filter id="b2" x="-20%" y="-20%" width="140%" height="140%"><feGaussianBlur stdDeviation="0.7"/></filter>
<clipPath id="c1clip"><rect x="24" y="0" width="104" height="118"/></clipPath>
</defs>
<rect x="0" y="0" width="128" height="118" fill="#fff"/><rect x="0.5" y="0.5" width="24" height="117" fill="#fffdf6" stroke="#ebe7dc" stroke-width="1"/>
<g clip-path="url(#c1clip)">
<rect x="24" y="0" width="104" height="118" fill="url(#c1bg)"/>
<g filter="url(#b1)">
<rect x="18" y="-6" width="40" height="50" fill="#88888a"/>
<rect x="88" y="-6" width="46" height="58" fill="#505052"/>
<path d="M98 50H134V80H100Z" fill="#7c7c7e"/>
<path d="M100 78H134V112H98Z" fill="#c2c2c4"/>
<path d="M18 70H66V112H18Z" fill="#d6d6d8"/>
<path d="M18 94H134V112H18Z" fill="#ececee" opacity=".85"/>
<path d="M38 70C33 44 42 12 64 4C82 0 96 10 100 26C90 20 76 24 68 40C62 52 66 68 62 82C52 86 42 80 38 70Z" fill="#050505"/>
<path d="M65 30C71 22 85 20 93 28C97 36 96 48 91 56C87 64 80 68 74 64C66 58 61 42 65 30Z" fill="#cecece"/>
<path d="M62 36C66 24 80 19 95 27C84 25 72 30 66 43Z" fill="#121212"/>
<path d="M83 30C89 28 93 30 95 36C96 44 94 52 90 58C92 48 90 38 83 30Z" fill="#f2f2f2"/>
<path d="M62 62C68 70 78 72 86 64L102 74L106 106H64Z" fill="#3c3c3c"/>
<path d="M74 68L102 70L106 104L82 100Z" fill="#1a1a1a"/>
<path d="M85 72L96 74L98 90L89 88Z" fill="#b0b0b0"/>
</g>
<g filter="url(#b2)">
<path d="M84 2L96 44" stroke="#9a9a9a" stroke-width="3"/>
<path d="M85.500 2L97.500 44" stroke="#222" stroke-width="1.200"/>
<rect x="93" y="40" width="11" height="18" rx="3" fill="#c4c4c4" transform="rotate(-12 98 50)"/>
<path d="M95 45H103M95 49H103M95 53H103" stroke="#707070" stroke-width="0.800" transform="rotate(-12 98 50)"/>
<ellipse cx="84" cy="40" rx="4" ry="0.9" fill="#444" opacity=".8" transform="rotate(12 84 40)"/>
<ellipse cx="71" cy="42" rx="3.500" ry="0.9" fill="#444" opacity=".8" transform="rotate(-8 71 42)"/>
<ellipse cx="80" cy="55" rx="3.400" ry="1.300" fill="#666" opacity=".8" transform="rotate(14 80 55)"/>
</g>
<rect x="104" y="2" width="16" height="19" rx="2" fill="#b87a2c"/>
<circle cx="112" cy="12.5" r="5.6" fill="#f6ead2"/><circle cx="112" cy="12.5" r="3.4" fill="#c98c3a"/>
<rect x="107" y="3.5" width="2.2" height="2" fill="#f6ead2"/><rect x="110.9" y="3.5" width="2.2" height="2" fill="#f6ead2"/><rect x="114.8" y="3.5" width="2.2" height="2" fill="#f6ead2"/>
<rect x="105" y="24" width="15" height="3" fill="#d8d8d8"/><rect x="105" y="28" width="15" height="2.4" fill="#9a9a9a"/>
<text x="30" y="86.5" font-family="Liberation Sans, sans-serif" font-size="20" font-weight="bold" fill="#ea2c52" textLength="43" lengthAdjust="spacingAndGlyphs">JHEENA</text>
<text x="30" y="103" font-family="Liberation Sans, sans-serif" font-size="19" font-weight="bold" fill="#ea2c52" textLength="54" lengthAdjust="spacingAndGlyphs">LODWICK</text>
<text x="75" y="86" font-family="Liberation Sans, sans-serif" font-style="italic" font-size="6" fill="#e6e6e6" textLength="40" lengthAdjust="spacingAndGlyphs">All My Loving......</text>
<rect x="24" y="105" width="104" height="13" fill="#f4f4f6"/>
<text x="31" y="110.5" font-family="Liberation Sans, Noto Sans CJK TC, sans-serif" font-size="4.2" font-weight="bold" fill="#222" textLength="84" lengthAdjust="spacingAndGlyphs">博泰唱片有限公司 全球發行代理 總經銷 有限公司</text>
<rect x="24" y="113" width="104" height="4" fill="#8e9ab0"/><rect x="24" y="116.5" width="104" height="1.5" fill="#3a4258"/>
</g>
<rect x="0" y="0" width="24" height="18" fill="#e9c44a"/>
<circle cx="11" cy="8" r="5.5" fill="none" stroke="#f8ecb8" stroke-width="1.6"/>
<rect x="5" y="15" width="2" height="1.6" fill="#fff"/><rect x="9" y="15" width="2" height="1.6" fill="#fff"/><rect x="13" y="15" width="2" height="1.6" fill="#fff"/>
<text font-family="Liberation Sans, Noto Sans CJK TC, sans-serif" font-weight="bold" font-size="8" fill="#c4122e"><tspan x="14" y="30">珍</tspan><tspan x="14" y="43">納</tspan></text>
<text font-family="Liberation Sans, Noto Sans CJK TC, sans-serif" font-size="3.6" fill="#d84a5e"><tspan x="15.5" y="50">的</tspan><tspan x="15.5" y="66">︵</tspan><tspan x="15.5" y="71">全</tspan><tspan x="15.5" y="75.5">部</tspan><tspan x="15.5" y="80">的</tspan><tspan x="15.5" y="84.5">愛</tspan><tspan x="15.5" y="89">︶</tspan></text>
<g font-family="Liberation Sans, Noto Sans CJK TC, sans-serif" font-size="3.4" fill="#444" style="writing-mode:vertical-rl">
<text x="11" y="21" textLength="84" lengthAdjust="spacingAndGlyphs">歌聲甜美入心，足以安慰人心，歌聲純潔動聽，真的之作</text>
<text x="6.5" y="21" textLength="84" lengthAdjust="spacingAndGlyphs">發燒友必聽的美女歌手全方位之選，最新發行專輯收錄</text>
<text x="2.5" y="21" textLength="84" lengthAdjust="spacingAndGlyphs">全部發燒級錄音，大碟中文名《全部的愛》歌聲動聽。</text>
</g>
</svg>

<!-- cover 2 : x186 y519 (grid y 312) 130x129 -->
<svg class="abs" style="left:186px;top:312px" width="130" height="129" viewBox="0 0 130 129">
<defs>
<radialGradient id="c2bg" cx="0.35" cy="0.3" r="0.9"><stop offset="0" stop-color="#3b3154"/><stop offset="0.6" stop-color="#2a2440"/><stop offset="1" stop-color="#1c1a2c"/></radialGradient>
<linearGradient id="c2skin" x1="0" y1="0" x2="1" y2="1"><stop offset="0" stop-color="#f0d4c4"/><stop offset="1" stop-color="#c49478"/></linearGradient>
</defs>
<rect width="130" height="129" fill="url(#c2bg)"/>
<g filter="url(#b1)">
<circle cx="52" cy="26" r="3" fill="#3a3aa0" opacity=".7"/><circle cx="98" cy="70" r="3" fill="#3a3aa0" opacity=".6"/><circle cx="78" cy="106" r="3" fill="#3a3aa0" opacity=".7"/><circle cx="24" cy="12" r="2.5" fill="#3a3aa0" opacity=".5"/>
<g transform="rotate(-9 22 52)"><path d="M0 42C1 30 8 22 18 19C26 18 33 22 36 29L24 29L15 32L12 44L9 58L6 72L0 76Z" fill="#0c0a10"/>
<path d="M15 31C19 28.500 28 28 34 29.500C36 33 37 38 38 42C39 46 41 50 40.600 52.500C40 54 38.600 54.500 38.800 56C39.200 58 39.400 60 38.600 62C38 65 37.500 67.500 35 68C30 69.500 24 70 19 66C13 62 8 56 8 48C8 40 11 34 15 31Z" fill="url(#c2skin)"/>
<path d="M8 48C8 56 13 62 19 66C24 70 30 69.500 35 68C28 66 20 60 16 50C14 44 14 38 15 31C11 34 8 40 8 48Z" fill="#b98468" opacity=".55"/>
</g><path d="M0 40L10 44L8 74L0 78Z" fill="#0c0a10"/><path d="M11 60L24 69L31 68L31 84L8 90Z" fill="#cfa088"/>
<path d="M0 79C6 76 14 76 22 84L25 99L0 101Z" fill="#ecd0c0"/>
<path d="M0 98C8 94 18 95 24 100L27 129H0Z" fill="#3a1e72"/>
<path d="M20 84C26 81 34 82 40 88C48 98 54 112 60 129H25L24 100Z" fill="#07070b"/>
<path d="M8 77L12 77L25 100L22 101Z" fill="#0a0a0e"/>
</g>
<g filter="url(#b2)" transform="rotate(-9 22 52)"><path d="M27 40.500C30 39.500 33 39.500 35.500 40.500" stroke="#2a1a1a" stroke-width="1.100" fill="none"/><path d="M29 43.800C31 43.200 33 43.200 35 44" stroke="#3a2626" stroke-width="0.900" fill="none"/><path d="M35.500 60C37 60.300 38.300 60 39.200 59.200" stroke="#b0505a" stroke-width="1.500" fill="none"/></g>
<rect x="100" y="3" width="16" height="20" rx="2" fill="#a08c4e"/><circle cx="108" cy="14.5" r="5.6" fill="none" stroke="#d8cc98" stroke-width="1.3"/><rect x="103" y="5" width="10" height="2" fill="#e8dfb8"/>
<rect x="100" y="30" width="16" height="3" fill="#8a8068"/><rect x="100" y="34" width="16" height="2.4" fill="#6a6250"/>
<path d="M74 39.5L75.2 42.6L78.5 42.8L76 44.9L76.8 48.1L74 46.3L71.2 48.1L72 44.9L69.5 42.8L72.800 42.6Z" fill="#f4f0f8"/>
<path d="M83.500 51L84.300 53L86.500 53.200L84.800 54.600L85.400 56.800L83.500 55.600L81.600 56.800L82.200 54.600L80.500 53.200L82.700 53Z" fill="#f4f0f8"/>
<circle cx="84.500" cy="61.500" r="1" fill="#f4f0f8"/>
<path d="M86 52C96 47 108 48 116 54M87 54C97 50 108 52 114 58M88 56C96 54 106 56 111 62" fill="none" stroke="#bfb08a" stroke-width="0.8"/>
<text x="51" y="81" font-family="Liberation Serif, serif" font-style="italic" font-size="33" fill="#fff">f</text>
<text x="65.500" y="73" font-family="Liberation Serif, serif" font-weight="bold" font-size="10.500" fill="#fff" textLength="33" lengthAdjust="spacingAndGlyphs">eelings...</text>
<rect x="53" y="74.200" width="77" height="0.8" fill="#d8d4e4"/>
<text x="72" y="81" font-family="Liberation Serif, serif" font-weight="bold" font-size="5.6" fill="#fff" textLength="42" lengthAdjust="spacingAndGlyphs">JHEENA LODWICK</text>
<text x="64.500" y="97" font-family="Liberation Serif, serif" font-weight="bold" font-size="6.500" fill="#fff">Vol.</text>
<text x="77.500" y="100" font-family="Liberation Serif, serif" font-size="21" fill="#fff">2</text>
</svg>

<!-- cover 3 : x180 y727 (grid y 520) 135x30 -->
<svg class="abs" style="left:180px;top:520px" width="135" height="31" viewBox="0 0 135 31">
<defs><linearGradient id="c3bg" x1="0" y1="0" x2="1" y2="0"><stop offset="0" stop-color="#8e8496"/><stop offset="0.08" stop-color="#b4acbc"/><stop offset="0.2" stop-color="#9a90a2"/><stop offset="0.6" stop-color="#867c8e"/><stop offset="1" stop-color="#8a8092"/></linearGradient></defs>
<rect width="135" height="31" fill="url(#c3bg)"/>
<g filter="url(#b2)">
<path d="M58 31C60 22 68 15 79 13C90 13 99 20 102 31Z" fill="#8a5e2c"/>
<g stroke-linecap="round"><path d="M78.7 28.2L77.4 12.2" stroke="#6a4820" stroke-width="2.2"/><path d="M70.4 27.3L67.2 21.1" stroke="#a87838" stroke-width="1.1"/><path d="M77.0 35.2L71.6 17.8" stroke="#d8b070" stroke-width="1.8"/><path d="M77.5 29.9L75.5 15.8" stroke="#d8b070" stroke-width="2.2"/><path d="M74.3 37.7L62.6 24.3" stroke="#b88848" stroke-width="1.5"/><path d="M81.6 33.4L82.3 25.1" stroke="#d8b070" stroke-width="1.9"/><path d="M79.2 32.1L79.1 11.2" stroke="#c09050" stroke-width="2.0"/><path d="M76.6 33.3L72.7 25.1" stroke="#c09050" stroke-width="1.6"/><path d="M87.4 32.8L97.5 18.9" stroke="#d8b070" stroke-width="1.3"/><path d="M85.7 37.4L93.2 29.6" stroke="#3a2410" stroke-width="1.1"/><path d="M84.1 25.5L84.3 18.9" stroke="#5a3a18" stroke-width="1.0"/><path d="M76.9 23.3L76.7 18.4" stroke="#d8b070" stroke-width="1.1"/><path d="M85.0 34.8L91.2 23.1" stroke="#e0c088" stroke-width="2.4"/><path d="M86.1 31.5L89.8 23.2" stroke="#e0c088" stroke-width="1.0"/><path d="M92.4 26.3L97.8 20.7" stroke="#d8b070" stroke-width="1.3"/><path d="M76.5 24.4L73.6 15.2" stroke="#a87838" stroke-width="1.3"/><path d="M72.6 26.7L69.4 20.7" stroke="#c09050" stroke-width="1.1"/><path d="M72.1 29.1L69.7 25.4" stroke="#b88848" stroke-width="1.2"/><path d="M82.9 24.6L83.3 19.3" stroke="#a87838" stroke-width="1.4"/><path d="M72.7 29.1L66.8 19.2" stroke="#6a4820" stroke-width="1.3"/><path d="M93.9 29.2L98.5 24.0" stroke="#c09050" stroke-width="1.2"/><path d="M80.2 32.4L80.3 15.1" stroke="#3a2410" stroke-width="2.2"/><path d="M81.9 32.0L83.7 25.1" stroke="#c09050" stroke-width="1.2"/><path d="M79.4 26.9L77.7 15.5" stroke="#e0c088" stroke-width="2.3"/><path d="M76.1 36.8L71.7 29.0" stroke="#d8b070" stroke-width="1.1"/><path d="M74.5 29.6L67.9 15.4" stroke="#a87838" stroke-width="2.2"/><path d="M92.4 32.1L99.5 25.5" stroke="#a87838" stroke-width="1.8"/><path d="M89.5 32.9L94.2 26.9" stroke="#d8b070" stroke-width="1.0"/><path d="M83.3 29.6L86.1 15.6" stroke="#c09050" stroke-width="1.1"/><path d="M81.4 25.7L83.2 11.3" stroke="#a87838" stroke-width="2.1"/><path d="M88.3 34.1L97.7 24.2" stroke="#3a2410" stroke-width="2.3"/><path d="M69.4 33.4L66.9 30.5" stroke="#3a2410" stroke-width="1.8"/><path d="M81.7 35.0L86.2 18.4" stroke="#3a2410" stroke-width="2.0"/><path d="M76.6 26.0L74.6 16.5" stroke="#6a4820" stroke-width="1.1"/><path d="M83.4 36.3L89.7 22.1" stroke="#e0c088" stroke-width="2.3"/><path d="M68.6 28.9L63.7 22.6" stroke="#d8b070" stroke-width="1.5"/><path d="M70.7 30.3L66.6 23.3" stroke="#5a3a18" stroke-width="1.9"/><path d="M78.0 23.6L77.9 16.9" stroke="#e0c088" stroke-width="1.9"/><path d="M89.0 27.8L91.0 22.8" stroke="#e0c088" stroke-width="1.8"/><path d="M77.0 34.6L74.2 22.5" stroke="#d8b070" stroke-width="2.0"/><path d="M88.1 35.3L92.3 30.8" stroke="#8a5c28" stroke-width="2.3"/><path d="M87.0 32.6L93.3 23.3" stroke="#b88848" stroke-width="1.4"/><path d="M86.2 33.9L93.6 22.7" stroke="#8a5c28" stroke-width="1.8"/><path d="M74.0 25.9L71.6 21.9" stroke="#b88848" stroke-width="1.3"/><path d="M85.1 33.4L93.1 18.8" stroke="#c09050" stroke-width="1.6"/><path d="M83.7 27.2L88.0 13.9" stroke="#e0c088" stroke-width="1.3"/><path d="M79.6 33.5L79.3 29.3" stroke="#d8b070" stroke-width="1.3"/><path d="M75.2 32.1L70.2 19.3" stroke="#a87838" stroke-width="1.6"/><path d="M89.7 25.7L93.2 21.7" stroke="#3a2410" stroke-width="1.2"/><path d="M78.7 27.3L77.2 12.3" stroke="#6a4820" stroke-width="2.1"/><path d="M89.8 33.3L96.5 25.1" stroke="#c09050" stroke-width="1.3"/><path d="M93.5 27.0L98.7 20.6" stroke="#5a3a18" stroke-width="1.4"/><path d="M82.9 36.3L86.6 23.2" stroke="#5a3a18" stroke-width="1.8"/><path d="M86.4 30.6L89.3 26.7" stroke="#c09050" stroke-width="1.6"/><path d="M69.1 33.0L63.4 26.0" stroke="#b88848" stroke-width="1.2"/><path d="M80.5 25.9L81.4 12.3" stroke="#b88848" stroke-width="1.8"/><path d="M85.8 26.3L88.6 18.4" stroke="#6a4820" stroke-width="1.9"/><path d="M80.8 24.2L80.6 14.7" stroke="#3a2410" stroke-width="2.3"/><path d="M89.6 30.5L92.6 24.9" stroke="#6a4820" stroke-width="1.7"/><path d="M81.3 33.3L83.1 19.2" stroke="#3a2410" stroke-width="1.0"/><path d="M90.8 33.2L97.3 27.6" stroke="#c09050" stroke-width="1.7"/><path d="M82.8 35.5L87.1 21.8" stroke="#3a2410" stroke-width="1.4"/><path d="M79.6 34.2L80.0 21.9" stroke="#b88848" stroke-width="1.7"/><path d="M71.5 33.0L68.2 29.6" stroke="#d8b070" stroke-width="1.0"/><path d="M75.5 37.2L71.4 29.7" stroke="#e0c088" stroke-width="1.9"/><path d="M68.8 29.6L65.9 25.8" stroke="#8a5c28" stroke-width="2.0"/><path d="M86.7 24.8L88.5 20.9" stroke="#6a4820" stroke-width="1.9"/><path d="M81.3 23.9L81.0 14.8" stroke="#e0c088" stroke-width="2.2"/><path d="M83.7 24.4L85.6 18.3" stroke="#5a3a18" stroke-width="2.3"/><path d="M76.2 32.2L70.0 15.3" stroke="#e0c088" stroke-width="2.2"/><path d="M73.5 34.7L64.7 23.2" stroke="#c09050" stroke-width="1.6"/><path d="M90.5 32.5L97.0 24.3" stroke="#d8b070" stroke-width="1.1"/><path d="M81.5 31.1L83.2 13.4" stroke="#6a4820" stroke-width="1.9"/><path d="M74.3 22.8L73.0 14.4" stroke="#b88848" stroke-width="1.1"/><path d="M69.0 32.8L63.4 26.8" stroke="#a87838" stroke-width="1.3"/><path d="M73.7 35.7L69.3 30.6" stroke="#c09050" stroke-width="1.8"/><path d="M69.9 29.7L66.1 25.9" stroke="#3a2410" stroke-width="1.7"/><path d="M80.4 30.0L79.2 16.6" stroke="#d8b070" stroke-width="2.2"/><path d="M72.7 31.6L66.1 21.0" stroke="#e0c088" stroke-width="1.8"/><path d="M68.0 29.1L63.1 24.6" stroke="#3a2410" stroke-width="1.8"/><path d="M72.0 29.9L69.2 23.6" stroke="#8a5c28" stroke-width="2.3"/><path d="M87.5 26.7L91.7 16.4" stroke="#5a3a18" stroke-width="2.2"/><path d="M86.0 26.2L89.4 15.5" stroke="#a87838" stroke-width="1.1"/><path d="M76.2 29.9L74.7 26.0" stroke="#d8b070" stroke-width="1.3"/><path d="M91.7 31.3L96.8 26.3" stroke="#a87838" stroke-width="1.7"/><path d="M76.0 22.4L75.1 14.6" stroke="#3a2410" stroke-width="2.4"/><path d="M68.1 32.4L60.6 25.9" stroke="#3a2410" stroke-width="1.7"/><path d="M87.2 28.5L88.3 24.8" stroke="#8a5c28" stroke-width="2.3"/><path d="M81.3 28.9L83.0 10.6" stroke="#c09050" stroke-width="1.9"/><path d="M84.5 36.1L92.6 23.3" stroke="#d8b070" stroke-width="1.5"/><path d="M89.0 34.1L100.6 22.3" stroke="#6a4820" stroke-width="1.9"/><path d="M65.7 28.3L62.2 24.4" stroke="#8a5c28" stroke-width="1.5"/><path d="M74.0 27.9L70.0 19.1" stroke="#8a5c28" stroke-width="1.0"/><path d="M87.1 29.5L91.8 19.5" stroke="#3a2410" stroke-width="1.1"/><path d="M75.9 31.1L72.9 19.7" stroke="#5a3a18" stroke-width="1.1"/><path d="M88.8 33.1L96.3 25.6" stroke="#e0c088" stroke-width="1.1"/><path d="M67.9 28.9L61.3 21.9" stroke="#e0c088" stroke-width="1.8"/><path d="M69.9 30.6L64.4 24.4" stroke="#d8b070" stroke-width="1.5"/><path d="M72.8 33.0L69.5 28.3" stroke="#8a5c28" stroke-width="1.9"/><path d="M83.9 31.5L89.5 16.8" stroke="#a87838" stroke-width="2.3"/><path d="M84.3 33.5L87.8 28.1" stroke="#6a4820" stroke-width="1.9"/><path d="M77.2 32.5L73.9 18.0" stroke="#e0c088" stroke-width="1.9"/><path d="M84.4 34.3L89.2 26.8" stroke="#e0c088" stroke-width="2.2"/><path d="M73.8 37.7L67.9 31.8" stroke="#d8b070" stroke-width="1.1"/><path d="M80.6 35.0L81.6 29.2" stroke="#6a4820" stroke-width="1.3"/><path d="M90.7 33.8L95.7 28.5" stroke="#b88848" stroke-width="2.0"/><path d="M84.9 36.4L89.1 31.2" stroke="#e0c088" stroke-width="1.6"/><path d="M85.4 31.7L86.9 26.0" stroke="#5a3a18" stroke-width="1.4"/><path d="M88.2 26.2L91.0 21.3" stroke="#c09050" stroke-width="1.6"/><path d="M75.5 29.1L73.0 20.4" stroke="#b88848" stroke-width="1.4"/></g>
<path d="M64 31C68 25 75 22 82 23C89 24 94 27 96 31Z" fill="#20150c" opacity=".8"/>
<path d="M50 18L62 19L59 23Z" fill="#c8a060"/>
<path d="M134 8C130 16 127 24 124 31" stroke="#c8c0cc" stroke-width="1.2" fill="none"/>
</g>
<path d="M113 0H127V17C127 21 113 21 113 17Z" fill="#c4a044"/>
<circle cx="120" cy="14" r="4.6" fill="none" stroke="#ecd89a" stroke-width="1.1"/>
<rect x="115.500" y="5" width="2" height="2" fill="#f4e8c0"/><rect x="119" y="5" width="2" height="2" fill="#f4e8c0"/><rect x="122.500" y="5" width="2" height="2" fill="#f4e8c0"/>
<rect x="113" y="24" width="14" height="2.500" fill="#7a7082"/><rect x="113" y="27.500" width="14" height="2" fill="#7a7082"/>
</svg>
</div>

<!-- BOTTOM -->
<div id="bottom">
<!-- vertical scrollbar -->
<div class="abs" style="left:1403px;top:207px;width:17px;height:550px;background:#e6e6e6"></div>
<div class="abs" style="left:1405px;top:205px;width:14px;height:96px;background:#fff;border:1px solid #d0d0d0"></div>
<div class="abs" style="left:1405px;top:742px;width:14px;height:15px;background:#fff;border:1px solid #d0d0d0"></div>
<svg class="abs" style="left:1408px;top:748px" width="8" height="5" viewBox="0 0 8 5"><path d="M0.3 0.4H7.7L4 4.4Z" fill="#555"/></svg>
<!-- sheet tab bar -->
<div class="abs" style="left:0;top:757px;width:1420px;height:22px;background:#e6e6e6"></div>
<div class="abs" style="left:0;top:757px;width:1420px;height:1px;background:#c6c6c6"></div>
<svg class="abs" style="left:20px;top:764px" width="5" height="8" viewBox="0 0 5 8"><path d="M4.5 0.5V7.5L0.8 4Z" fill="#c0c0c0"/></svg>
<svg class="abs" style="left:40px;top:764px" width="5" height="8" viewBox="0 0 5 8"><path d="M0.5 0.5V7.5L4.2 4Z" fill="#c0c0c0"/></svg>
<div class="abs" style="left:74px;top:757px;width:63px;height:20px;background:#fff;border-bottom:2px solid #217346;border-left:1px solid #d0d0d0;border-right:1px solid #d0d0d0"></div>
<div class="abs" style="left:74px;top:759px;width:63px;text-align:center;font-size:12.5px;line-height:15px;color:#217346;font-weight:350">工作表1</div>
<svg class="abs" style="left:160px;top:760.700px" width="16" height="16" viewBox="0 0 16 16" fill="none" stroke="#666" stroke-width="1.1"><circle cx="8" cy="8" r="6.8"/><path d="M8 4.5V11.5M4.5 8H11.5" stroke-width="1.3"/></svg>
<div class="abs" style="left:850px;top:763px;width:2px;height:2px;background:#aaa"></div>
<div class="abs" style="left:850px;top:766.5px;width:2px;height:2px;background:#aaa"></div>
<div class="abs" style="left:850px;top:770px;width:2px;height:2px;background:#aaa"></div>
<div class="abs" style="left:863px;top:761px;width:14px;height:15px;background:#fff;border:1px solid #d0d0d0"></div>
<svg class="abs" style="left:867px;top:765px" width="5" height="8" viewBox="0 0 5 8"><path d="M4.5 0.5V7.5L0.6 4Z" fill="#555"/></svg>
<div class="abs" style="left:877px;top:761px;width:452px;height:15px;background:#fff;border:1px solid #d0d0d0"></div>
<div class="abs" style="left:1388px;top:761px;width:14px;height:15px;background:#fff;border:1px solid #d0d0d0"></div>
<svg class="abs" style="left:1393px;top:765px" width="5" height="8" viewBox="0 0 5 8"><path d="M0.5 0.5V7.5L4.4 4Z" fill="#555"/></svg>
<!-- status bar -->
<div class="abs" style="left:0;top:778px;width:1420px;height:20px;background:#f3f2f1"></div>
<div class="abs" style="left:0;top:778px;width:1420px;height:1px;background:#d2d0ce"></div>
<div class="abs" style="left:1162px;top:779px;width:31px;height:19px;background:#c8c6c4"></div>
<svg class="abs" style="left:1171px;top:782px" width="14" height="13" viewBox="0 0 14 13" fill="none" stroke="#6e6e6e" stroke-width="0.9"><rect x="0.5" y="0.5" width="13" height="12"/><path d="M0.5 4.5H13.5M0.5 8.5H13.5M4.8 0.5V12.5M9.2 0.5V12.5"/></svg>
<svg class="abs" style="left:1202px;top:782px" width="14" height="13" viewBox="0 0 14 13" fill="none" stroke="#6e6e6e" stroke-width="0.9"><rect x="0.5" y="0.5" width="13" height="12"/><rect x="3.5" y="3" width="7" height="7"/><path d="M5 5.5H9M5 7.5H9" stroke-width="0.8"/></svg>
<svg class="abs" style="left:1232px;top:782px" width="14" height="13" viewBox="0 0 14 13" fill="none" stroke="#6e6e6e" stroke-width="0.9"><rect x="0.5" y="0.5" width="13" height="12"/><path d="M4.5 0.5V6.5H9.5V0.5"/></svg>
<div class="abs" style="left:1259px;top:788.200px;width:8px;height:1.600px;background:#666"></div>
<div class="abs" style="left:1271px;top:788.5px;width:91px;height:1px;background:#b0aeac"></div>
<div class="abs" style="left:1316px;top:785px;width:1px;height:8px;background:#b0aeac"></div>
<div class="abs" style="left:1307px;top:783px;width:4px;height:12px;background:#666"></div>
<div class="abs" style="left:1365px;top:788.200px;width:9px;height:1.600px;background:#666"></div>
<div class="abs" style="left:1368.700px;top:784.500px;width:1.600px;height:9px;background:#666"></div>
<div class="abs" style="left:1382px;top:781px;font-size:11.5px;line-height:15px;color:#444">85%</div>
<!-- watermark -->
<svg class="abs" style="left:1308px;top:764px;opacity:.7" width="104" height="28" viewBox="0 0 104 28"><circle cx="13.500" cy="14.500" r="9.300" fill="none" stroke="#8e8e8e" stroke-width="1.800"/><circle cx="13.500" cy="14.500" r="6.600" fill="none" stroke="#8e8e8e" stroke-width="1.300"/><path d="M13.500 2V7" stroke="#8e8e8e" stroke-width="2"/><text x="13.500" y="18.500" text-anchor="middle" font-family="Liberation Sans, sans-serif" font-weight="bold" font-size="11" fill="#8e8e8e">T</text><text x="26" y="23" font-family="Liberation Sans, sans-serif" font-weight="bold" font-size="22" fill="#8e8e8e" textLength="69" lengthAdjust="spacingAndGlyphs">Tasker</text></svg>
<div class="abs" style="left:0;top:797.600px;width:1420px;height:3px;background:#2a2a2a"></div>
</div>

</div>
</body>
</html>
